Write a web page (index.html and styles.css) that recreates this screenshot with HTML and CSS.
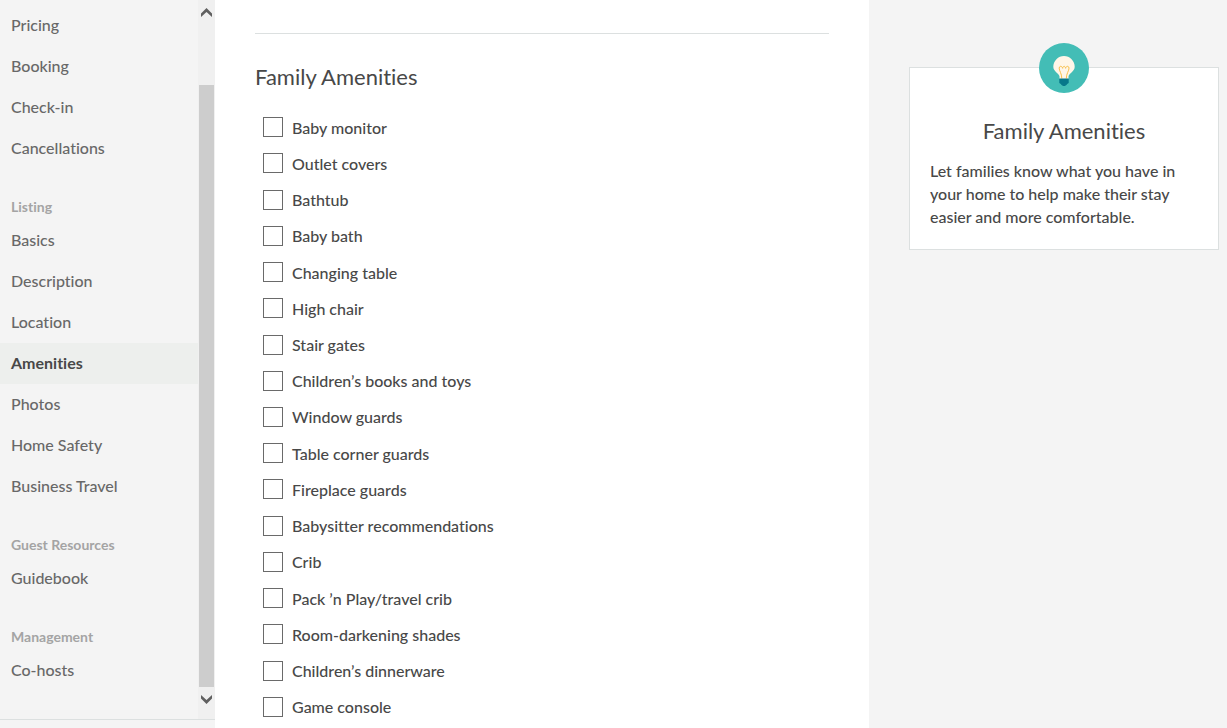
FILE: index.html
```html
<!DOCTYPE html>
<html lang="en">
<head>
<meta charset="utf-8">
<title>Amenities</title>
<link rel="stylesheet" href="styles.css">
</head>
<body>
<div class="page">
  <div class="sidebar">
    <div class="sidebar-scroll">
      <nav class="menu">
        <a class="menu-item" href="#">Pricing</a>
        <a class="menu-item" href="#">Booking</a>
        <a class="menu-item" href="#">Check-in</a>
        <a class="menu-item" href="#">Cancellations</a>
        <h2 class="menu-heading">Listing</h2>
        <a class="menu-item" href="#">Basics</a>
        <a class="menu-item" href="#">Description</a>
        <a class="menu-item" href="#">Location</a>
        <a class="menu-item active" href="#" aria-current="page">Amenities</a>
        <a class="menu-item" href="#">Photos</a>
        <a class="menu-item" href="#">Home Safety</a>
        <a class="menu-item" href="#">Business Travel</a>
        <h2 class="menu-heading">Guest Resources</h2>
        <a class="menu-item" href="#">Guidebook</a>
        <h2 class="menu-heading">Management</h2>
        <a class="menu-item" href="#">Co-hosts</a>
      </nav>
      <div class="scrollbar" aria-hidden="true">
        <svg class="scroll-arrow" width="17" height="17" viewBox="0 0 17 17"><path d="M3 13.500 8.500 8l5.500 5.500v3.500L8.500 12 3 17z" fill="#606060"/></svg>
        <div class="scroll-thumb"></div>
        <svg class="scroll-arrow" width="17" height="17" viewBox="0 0 17 17"><path d="M3 8v3.500l5.500 5.500 5.500-5.500V8l-5.500 5z" fill="#606060"/></svg>
      </div>
    </div>
  </div>
  <main class="content">
    <hr class="divider">
    <h1 class="title">Family Amenities</h1>
    <div class="options">
      <label class="option"><input class="check" type="checkbox">Baby monitor</label>
      <label class="option"><input class="check" type="checkbox">Outlet covers</label>
      <label class="option"><input class="check" type="checkbox">Bathtub</label>
      <label class="option"><input class="check" type="checkbox">Baby bath</label>
      <label class="option"><input class="check" type="checkbox">Changing table</label>
      <label class="option"><input class="check" type="checkbox">High chair</label>
      <label class="option"><input class="check" type="checkbox">Stair gates</label>
      <label class="option"><input class="check" type="checkbox">Children’s books and toys</label>
      <label class="option"><input class="check" type="checkbox">Window guards</label>
      <label class="option"><input class="check" type="checkbox">Table corner guards</label>
      <label class="option"><input class="check" type="checkbox">Fireplace guards</label>
      <label class="option"><input class="check" type="checkbox">Babysitter recommendations</label>
      <label class="option"><input class="check" type="checkbox">Crib</label>
      <label class="option"><input class="check" type="checkbox">Pack ’n Play/travel crib</label>
      <label class="option"><input class="check" type="checkbox">Room-darkening shades</label>
      <label class="option"><input class="check" type="checkbox">Children’s dinnerware</label>
      <label class="option"><input class="check" type="checkbox">Game console</label>
    </div>
  </main>
  <aside class="help">
    <section class="card">
      <svg class="bulb" width="50" height="50" viewBox="0 0 50 50" aria-hidden="true">
        <circle cx="25" cy="25" r="25" fill="#43bdb6"/>
        <path d="M20.500 36v-2.500C20 30 14.300 28.500 14.300 23.700a10.700 10.700 0 0 1 21.400 0C35.700 28.500 30 30 29.500 33.500V36z" fill="#fff6e8"/>
        <path d="M22.800 35.500c0-5-2.600-7.500-2.600-10.400 0-2.400 3-2.400 3.400.2.400-2.600 2.600-2.600 3 0 .4-2.600 3.400-2.600 3.400-.2 0 2.900-2.700 5.400-2.700 10.400" fill="none" stroke="#f9c04a" stroke-width="1"/>
        <path d="M20.300 35.500h9.400v4.500l-1.500 1c-1 1.500-2 2-3.200 2s-2.200-.5-3.200-2l-1.500-1z" fill="#07778a"/>
      </svg>
      <h2 class="card-title">Family Amenities</h2>
      <p class="card-text">Let families know what you have in your home to help make their stay easier and more comfortable.</p>
    </section>
  </aside>
</div>
</body>
</html>
```
FILE: styles.css
```css
* { box-sizing: border-box; }

body {
  margin: 0;
  font-family: Lato, "Liberation Sans", sans-serif;
  font-size: 16px;
  font-weight: 500;
  font-variant-ligatures: none;
  color: #484848;
  background: #f4f4f4;
}

.page {
  display: flex;
  min-height: 100vh;
}

.sidebar {
  flex: 0 0 215px;
  display: flex;
  flex-direction: column;
  padding-bottom: 8px;
}

.sidebar-scroll {
  flex: 1;
  display: flex;
  border-bottom: 1px solid #dce0e0;
}

.menu {
  flex: 1;
  padding-top: 5px;
}

.menu-item {
  display: block;
  padding: 0 0 2px 11px;
  line-height: 39px;
  color: #686868;
  text-decoration: none;
}

.menu-item.active {
  background: #edefed;
  color: #484848;
  font-weight: 700;
}

.menu-heading {
  margin: 0;
  padding: 28px 0 3px 11px;
  font-size: 14px;
  line-height: 20px;
  font-weight: 700;
  color: #a4a4a4;
}

.scrollbar {
  flex: 0 0 17px;
  display: flex;
  flex-direction: column;
  padding-bottom: 15px;
  background: #f0f0f0;
}

.scroll-arrow { display: block; }

.scroll-thumb {
  flex: 1;
  margin: 68px 1px 0;
  background: #cdcdcd;
}

.content {
  flex: 1;
  display: flex;
  flex-direction: column;
  padding: 33px 40px 3px;
  background: #fff;
}

.divider {
  width: 100%;
  margin: 0;
  border: 0;
  border-top: 1px solid #dce0e0;
}

.title {
  margin: 27px 0 16px;
  font-size: 22px;
  line-height: 32px;
  font-weight: 400;
}

.options {
  flex: 1;
  display: flex;
  flex-direction: column;
  padding-left: 8px;
}

.option {
  flex: 1;
  display: flex;
  align-items: center;
  gap: 9px;
}

.check {
  appearance: none;
  width: 20px;
  height: 20px;
  margin: 0;
  border: 1px solid #6a6a6a;
  background: #fff;
}

.check:checked { background: #43bdb6; }

.help {
  flex: 0 0 358px;
  padding: 67px 8px 0 40px;
}

.card {
  position: relative;
  padding: 47px 20px 21px;
  border: 1px solid #dce0e0;
  background: #fff;
}

.bulb {
  position: absolute;
  top: -25px;
  left: calc(50% - 25px);
}

.card-title {
  margin: 0 0 12px;
  font-size: 22px;
  line-height: 32px;
  font-weight: 400;
  text-align: center;
}

.card-text {
  margin: 0;
  line-height: 23px;
}
```
